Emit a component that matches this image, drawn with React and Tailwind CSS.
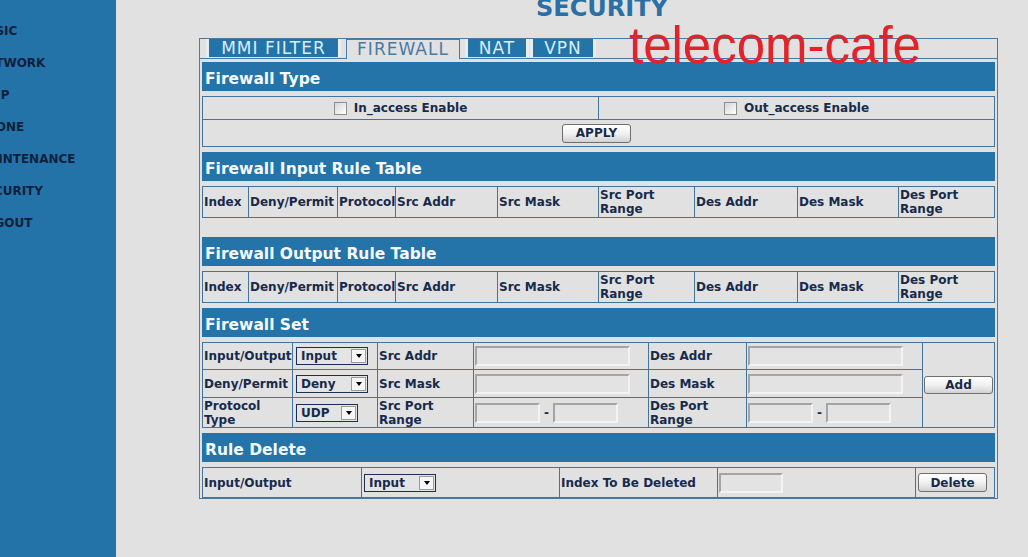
import React from 'react'

const LINE = 'border-[#44739c]'

const menu = ['BASIC', 'NETWORK', 'VOIP', 'PHONE', 'MAINTENANCE', 'SECURITY', 'LOGOUT']

function Bar({ title, className = '' }) {
  return (
    <div className={`h-[29px] shrink-0 bg-[#2473a9] pl-[3px] pt-[5px] flex items-center text-[15.5px] leading-[18px] font-bold text-[#f5f9fc] ${className}`}>
      {title}
    </div>
  )
}

function Check() {
  return <span className="w-[13px] h-[13px] border border-[#8e8f8f] bg-linear-to-br from-[#d6d6d6] to-white shrink-0" />
}

function Btn({ children, w = 'w-[69px]', h = 'h-[19px]', className = '' }) {
  return (
    <button className={`${w} ${h} ${className} rounded-[3px] border border-[#6f6f6f] bg-linear-to-b from-white via-[#f1f1f1] to-[#d2d2d2] text-[12px] leading-none font-bold text-[#172a4b] flex items-center justify-center`}>
      {children}
    </button>
  )
}

function Select({ value, w = 'w-[72px]', className = '' }) {
  return (
    <div className={`${w} ${className} h-[18px] border border-[#1b2f50] bg-[#e4e4e4] flex items-center justify-between pl-[4px]`}>
      <span className="font-bold text-[12px] leading-none text-[#172a4b]">{value}</span>
      <span className="w-[15px] h-[14px] mr-px border border-[#9a9a9a] bg-[#f6f6f6] flex items-center justify-center">
        <span className="w-0 h-0 border-x-[3.5px] border-x-transparent border-t-[4px] border-t-black" />
      </span>
    </div>
  )
}

function Field({ w = 'w-[155px]', className = '' }) {
  return (
    <div className={`${w} ${className} h-[20px] bg-[#e3e3e3] border-2 border-t-[#a4a4a4] border-l-[#a4a4a4] border-b-[#f3f3f3] border-r-[#f3f3f3]`} />
  )
}

function Range() {
  return (
    <div className="flex items-center">
      <Field w="w-[65px]" />
      <span className="w-[13px] text-center text-[12px] text-[#172a4b]">-</span>
      <Field w="w-[65px]" />
    </div>
  )
}

const ruleCols = [
  ['Index', 'w-[45px]'],
  ['Deny/Permit', 'w-[89px]'],
  ['Protocol', 'w-[58px]'],
  ['Src Addr', 'w-[102px]'],
  ['Src Mask', 'w-[101px]'],
  ['Src Port Range', 'w-[96px]'],
  ['Des Addr', 'w-[103px]'],
  ['Des Mask', 'w-[101px]'],
  ['Des Port Range', 'flex-1'],
]

function RuleTable() {
  return (
    <div className={`flex h-[32px] border ${LINE}`}>
      {ruleCols.map(([label, w], i) => (
        <div key={label} className={`${w} ${i ? 'border-l ' + LINE : ''} flex items-center pl-[1px] leading-[14px]`}>
          {label}
        </div>
      ))}
    </div>
  )
}

function GCell({ children, top, left, className = '' }) {
  return (
    <div className={`flex items-center pl-[1px] leading-[14px] ${top ? 'border-t ' + LINE : ''} ${left ? 'border-l ' + LINE : ''} ${className}`}>
      {children}
    </div>
  )
}

export default function App() {
  return (
    <div className="relative flex w-[1028px] h-[557px] overflow-hidden bg-[#e1e1e1] font-['DejaVu_Sans',sans-serif]">
      {/* left menu, cropped at the page edge */}
      <div className="w-[116px] shrink-0 bg-[#2373a9] pt-[15px] flex flex-col overflow-hidden">
        {menu.map((m) => (
          <div key={m} className="h-[32px] leading-[32px] -ml-[23px] whitespace-nowrap text-[12px] font-bold text-[#0f1f3b]">
            {m}
          </div>
        ))}
      </div>

      <div className="flex flex-col pl-[83px]">
        <div className="h-[38px] w-[799px] flex justify-center items-start pl-[7px]">
          <div className="-mt-[4px] text-[24px] leading-[24px] font-bold text-[#2b6fa4]">SECURITY</div>
        </div>

        <div className="w-[799px] border border-[#4a79a1] px-[2px] flex flex-col text-[12px] font-bold text-[#172a4b]">
          {/* tabs */}
          <div className="-mx-[2px] h-[20px] border-b border-[#4a79a1] flex items-start text-[17px] leading-[19px] tracking-[1px]">
            <div className="ml-[6px] w-[135px] h-[18px] border-x-[3px] border-[#eaedf0] bg-[#2473a9] text-[#d8effa] font-normal text-center">MMI FILTER</div>
            <div className="ml-[5px] w-[114px] h-[20px] border-x border-t border-[#4a79a1] bg-[#e1e1e1] text-[#4a79a6] font-normal text-center">FIREWALL</div>
            <div className="ml-[5px] w-[64px] h-[18px] border-x-[3px] border-[#eaedf0] bg-[#2473a9] text-[#d8effa] font-normal text-center">NAT</div>
            <div className="ml-[1px] w-[66px] h-[18px] border-x-[3px] border-[#eaedf0] bg-[#2473a9] text-[#d8effa] font-normal text-center">VPN</div>
          </div>

          <div className="mt-[3px] flex flex-col gap-[5px]">
            <Bar title="Firewall Type" />
            <div className={`border ${LINE} h-[51px] flex flex-col`}>
              <div className="flex h-[22px]">
                <div className="w-[395px] flex items-center justify-center gap-[7px]">
                  <Check />
                  <span>In_access Enable</span>
                </div>
                <div className={`flex-1 border-l ${LINE} flex items-center justify-center gap-[7px]`}>
                  <Check />
                  <span>Out_access Enable</span>
                </div>
              </div>
              <div className={`flex-1 border-t ${LINE} flex items-center justify-center`}>
                <Btn className="-ml-[4px]">APPLY</Btn>
              </div>
            </div>

            <Bar title="Firewall Input Rule Table" />
            <RuleTable />

            <Bar title="Firewall Output Rule Table" className="mt-[14px]" />
            <RuleTable />

            <Bar title="Firewall Set" />
            <div className={`border ${LINE} grid grid-cols-[89px_85px_96px_175px_98px_176px_1fr] grid-rows-[26px_28px_30px]`}>
              <GCell className="whitespace-nowrap">Input/Output</GCell>
              <GCell left><Select value="Input" className="ml-[2px]" /></GCell>
              <GCell left>Src Addr</GCell>
              <GCell left><Field /></GCell>
              <GCell left>Des Addr</GCell>
              <GCell left><Field /></GCell>
              <GCell left className="row-span-3">
                <Btn h="h-[18px]">Add</Btn>
              </GCell>

              <GCell top className="whitespace-nowrap">Deny/Permit</GCell>
              <GCell top left><Select value="Deny" className="ml-[2px]" /></GCell>
              <GCell top left>Src Mask</GCell>
              <GCell top left><Field /></GCell>
              <GCell top left>Des Mask</GCell>
              <GCell top left><Field /></GCell>

              <GCell top>Protocol Type</GCell>
              <GCell top left><Select value="UDP" w="w-[62px]" className="ml-[2px]" /></GCell>
              <GCell top left>Src Port Range</GCell>
              <GCell top left><Range /></GCell>
              <GCell top left>Des Port Range</GCell>
              <GCell top left><Range /></GCell>
            </div>

            <Bar title="Rule Delete" />
            <div className={`flex h-[31px] border ${LINE}`}>
              <div className="w-[158px] flex items-center pl-[1px]">Input/Output</div>
              <div className={`w-[198px] border-l ${LINE} flex items-center pl-[1px]`}>
                <Select value="Input" className="ml-[1px]" />
              </div>
              <div className={`w-[158px] border-l ${LINE} flex items-center pl-[1px] whitespace-nowrap`}>Index To Be Deleted</div>
              <div className={`w-[198px] border-l ${LINE} flex items-center pl-[1px]`}>
                <Field w="w-[64px]" />
              </div>
              <div className={`flex-1 border-l ${LINE} flex items-center pl-[1px]`}>
                <Btn className="ml-[1px]">Delete</Btn>
              </div>
            </div>
          </div>
        </div>
      </div>

      {/* watermark laid over the page */}
      <div className="absolute left-[629px] top-[20px] text-[51px] leading-[51px] font-['Liberation_Sans',sans-serif] text-[#e3232b] pointer-events-none">
        telecom-cafe
      </div>
    </div>
  )
}
